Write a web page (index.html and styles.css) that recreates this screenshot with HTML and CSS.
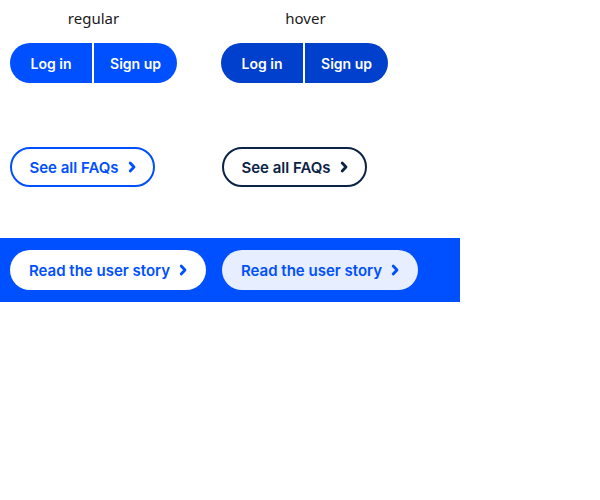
FILE: index.html
```html
<!DOCTYPE html>
<html>
<head>
<meta charset="utf-8">
<link rel="stylesheet" href="styles.css">
</head>
<body>
<div class="row labels">
  <div class="cell"><div class="label">regular</div></div>
  <div class="cell"><div class="label">hover</div></div>
</div>
<div class="row groups">
  <div class="cell">
    <div class="group">
      <span class="seg">Log in</span><span class="seg">Sign up</span>
    </div>
  </div>
  <div class="cell">
    <div class="group hover">
      <span class="seg">Log in</span><span class="seg">Sign up</span>
    </div>
  </div>
</div>
<div class="row faqs">
  <div class="cell">
    <a class="outline">See all FAQs <svg class="chev" viewBox="0 0 8 12" width="8" height="12"><path d="M2.2 2l3.8 4-3.8 4" fill="none" stroke="currentColor" stroke-width="2.8" stroke-linecap="round" stroke-linejoin="round"/></svg></a>
  </div>
  <div class="cell">
    <a class="outline hover">See all FAQs <svg class="chev" viewBox="0 0 8 12" width="8" height="12"><path d="M2.2 2l3.8 4-3.8 4" fill="none" stroke="currentColor" stroke-width="2.8" stroke-linecap="round" stroke-linejoin="round"/></svg></a>
  </div>
</div>
<div class="band">
  <div class="cell">
    <a class="pill">Read the user story <svg class="chev" viewBox="0 0 8 12" width="8" height="12"><path d="M2.2 2l3.8 4-3.8 4" fill="none" stroke="currentColor" stroke-width="2.8" stroke-linecap="round" stroke-linejoin="round"/></svg></a>
  </div>
  <div class="cell">
    <a class="pill hover">Read the user story <svg class="chev" viewBox="0 0 8 12" width="8" height="12"><path d="M2.2 2l3.8 4-3.8 4" fill="none" stroke="currentColor" stroke-width="2.8" stroke-linecap="round" stroke-linejoin="round"/></svg></a>
  </div>
</div>
</body>
</html>
```
FILE: styles.css
```css
body {
  margin: 0;
  font-family: "Inter", "Noto Sans", sans-serif;
  background: #fff;
}
.row, .band {
  display: grid;
  grid-template-columns: 212px 212px;
  padding-left: 10px;
}
.cell { display: flex; }
.labels { padding-top: 8px; height: 43px; box-sizing: border-box; }
.labels .cell { width: 167px; justify-content: center; }
.label {
  font-family: "Noto Sans", sans-serif;
  font-size: 15px;
  color: #1a1a1a;
  line-height: 20px;
}
.groups { height: 104px; }
.groups .cell:nth-child(2) { margin-left: -1px; }
.group {
  display: flex;
  height: 40px;
  gap: 2px;
}
.seg {
  background: #0050ff;
  color: #fff;
  font-weight: 600;
  font-size: 14px;
  display: flex;
  align-items: center;
  justify-content: center;
}
.seg:first-child { width: 82px; border-radius: 20px 0 0 20px; }
.seg:last-child { width: 83px; border-radius: 0 20px 20px 0; }
.group.hover .seg { background: #0040cc; }
.faqs { height: 91px; }
.outline {
  box-sizing: border-box;
  width: 145px;
  height: 40px;
  border: 2px solid #0050ff;
  border-radius: 20px;
  color: #0050ff;
  font-weight: 600;
  font-size: 15px;
  display: flex;
  align-items: center;
  justify-content: center;
  gap: 9px;
}
.outline.hover { border-color: #0b2346; color: #0b2346; }
.band {
  width: 460px;
  box-sizing: border-box;
  background: #0050ff;
  padding-top: 12px;
  padding-bottom: 12px;
}
.pill {
  width: 196px;
  height: 40px;
  border-radius: 20px;
  background: #fff;
  color: #0050ff;
  font-weight: 600;
  font-size: 15px;
  display: flex;
  align-items: center;
  justify-content: center;
  gap: 9px;
}
.pill.hover { background: #e6eeff; }
.chev { display: block; }
```
